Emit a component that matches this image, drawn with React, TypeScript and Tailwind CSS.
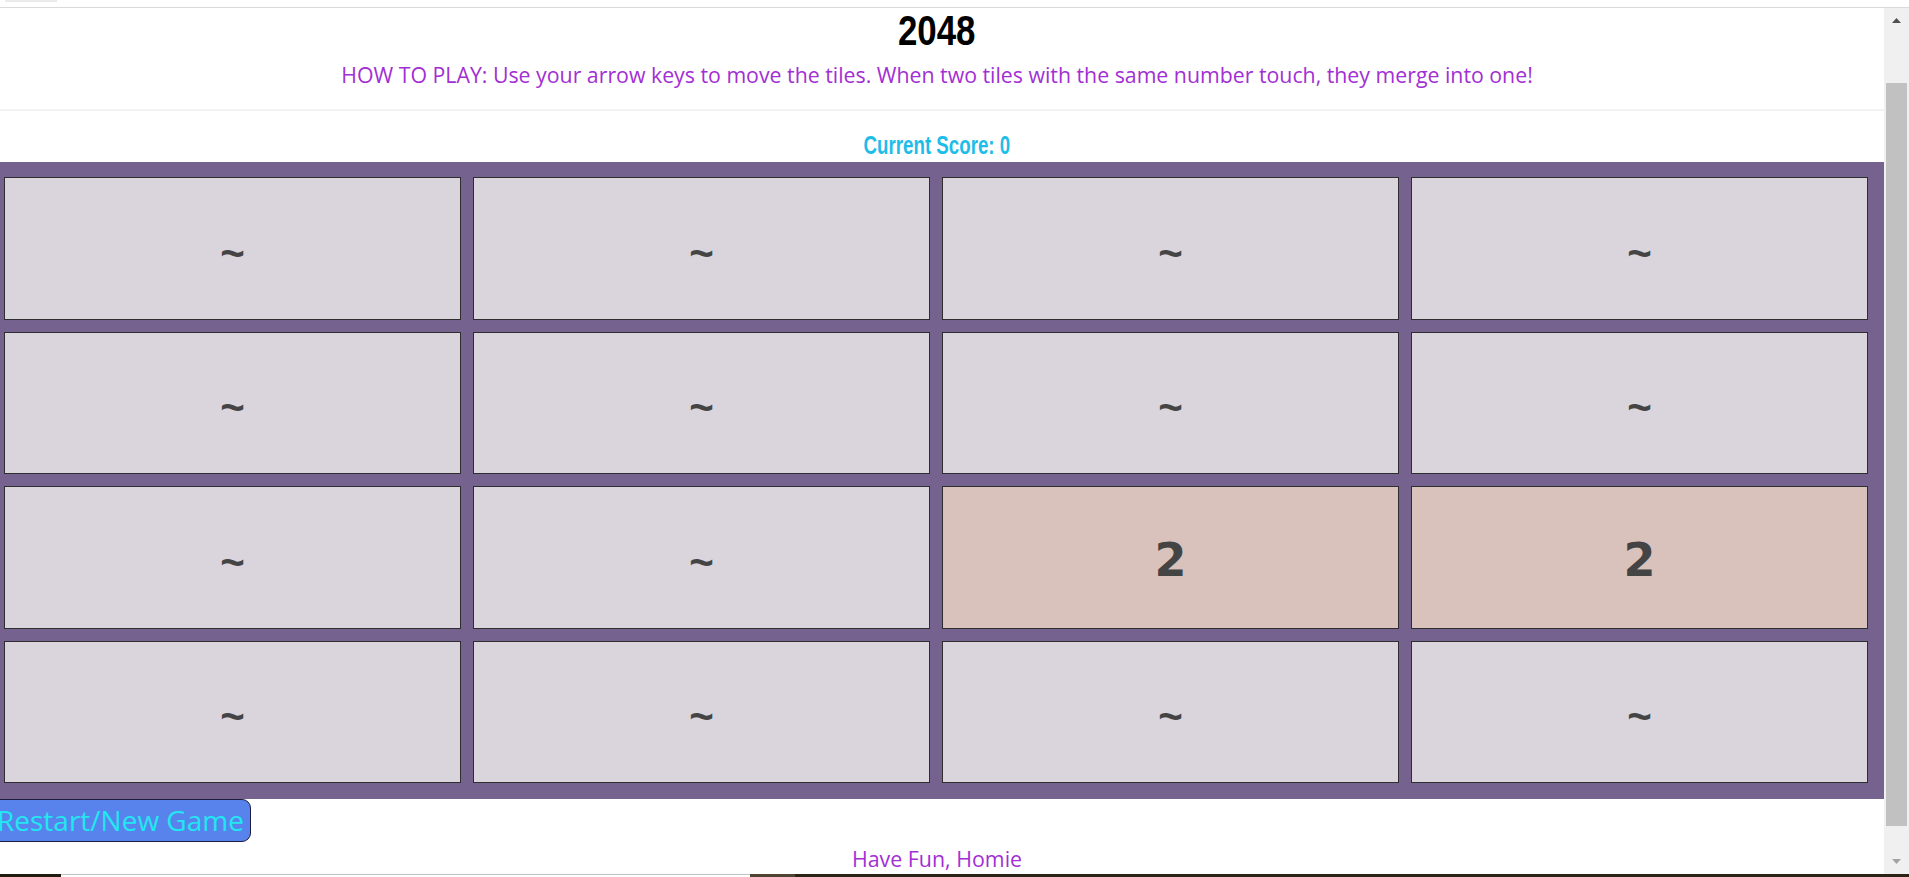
import React from "react";

// ── Board data ──────────────────────────────────────────────────────────────

/** 0 renders as an empty "~" tile, anything else as its number. */
const BOARD: number[][] = [
  [0, 0, 0, 0],
  [0, 0, 0, 0],
  [0, 0, 2, 2],
  [0, 0, 0, 0],
];

// ── Pieces ──────────────────────────────────────────────────────────────────

function Tile({ value }: { value: number }) {
  const empty = value === 0;
  return (
    <div
      className={
        "flex items-center justify-center border border-[#2e2e2e] font-bold leading-none text-[#444] " +
        (empty
          ? "bg-[#dad4dc] pt-[11px] font-['Liberation_Sans',sans-serif] text-[42px]"
          : "bg-[#d8c2bb] pt-[6px] font-['DejaVu_Sans',sans-serif] text-[46px]")
      }
    >
      {empty ? "~" : value}
    </div>
  );
}

function Scrollbar() {
  return (
    <aside className="flex w-[25px] shrink-0 flex-col bg-[#f0f0f0]">
      <div className="flex h-[25px] items-center justify-center">
        <svg width="9" height="6" viewBox="0 0 9 6" aria-hidden>
          <path d="M4.5 0 L9 5 L0 5 Z" fill="#505050" />
        </svg>
      </div>
      <div className="flex-1 pb-[24px] pl-[2px] pr-[2px] pt-[50px]">
        <div className="h-full bg-[#c1c1c1]" />
      </div>
      <div className="flex h-[24px] items-center justify-center">
        <svg width="9" height="6" viewBox="0 0 9 6" aria-hidden>
          <path d="M0 0 L9 0 L4.5 5 Z" fill="#a3a3a3" />
        </svg>
      </div>
    </aside>
  );
}

// ── Page ────────────────────────────────────────────────────────────────────

export default function App() {
  return (
    <div className="flex h-[877px] w-[1909px] flex-col overflow-hidden bg-white">
      {/* window chrome strip */}
      <div className="h-[7px] pl-[5px]">
        <div className="h-[2px] w-[52px] bg-[#ebebeb]" />
      </div>
      <div className="h-px bg-[#dadada]" />

      <div className="flex min-h-0 flex-1">
        <main className="min-w-0 flex-1 overflow-hidden">
          {/* Impact isn't available, so a squeezed bold Arial stands in */}
          <h1 className="h-[54px] pr-[10px] text-center font-['Liberation_Sans',sans-serif] text-[42px] font-bold leading-[46px] text-black">
            <span className="inline-block scale-x-[0.83]">2048</span>
          </h1>

          <p className="h-[47px] pr-[10px] pt-[1px] text-center font-['Open_Sans',sans-serif] text-[21.3px] leading-[24px] text-[#a22fd3]">
            HOW TO PLAY: Use your arrow keys to move the tiles. When two tiles
            with the same number touch, they merge into one!
          </p>

          <div className="h-[2px] bg-[#f2f2f2]" />

          <div className="h-[51px] pr-[10px] pt-[20px] text-center font-['Liberation_Sans',sans-serif] text-[26px] font-bold leading-[28px] text-[#1ebde9]">
            <span className="inline-block scale-x-[0.72]">Current Score: 0</span>
          </div>

          {/* board */}
          <div className="grid h-[637px] grid-cols-4 grid-rows-4 gap-[12px] bg-[#75628f] pb-[16px] pl-[4px] pr-[16px] pt-[15px]">
            {BOARD.flat().map((v, i) => (
              <Tile key={i} value={v} />
            ))}
          </div>

          <button className="-ml-[10px] block h-[43px] rounded-[9px] border border-[#1c1c3c] bg-[#5983ec] px-[6px] font-['Open_Sans',sans-serif] text-[28px] leading-[41px] text-[#22e6f0]">
            Restart/New Game
          </button>

          <p className="pr-[10px] pt-[5px] text-center font-['Open_Sans',sans-serif] text-[21.4px] leading-[24px] text-[#a22fd3]">
            Have Fun, Homie
          </p>
        </main>
        <Scrollbar />
      </div>

      {/* taskbar peeking in at the bottom edge */}
      <div className="flex h-[3px]">
        <div className="w-[61px] bg-[#221b0f]" />
        <div className="w-[689px] border-t border-[#c4c4c4] bg-white" />
        <div className="w-[45px] bg-[#4d4434]" />
        <div className="flex-1 bg-[#2b2314]" />
      </div>
    </div>
  );
}
